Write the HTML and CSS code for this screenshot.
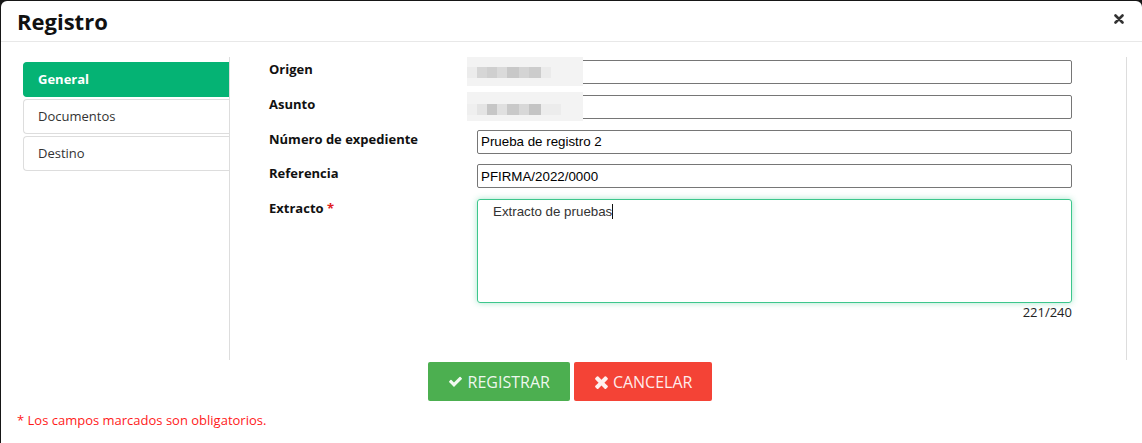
FILE: index.html
```html
<!DOCTYPE html>
<html>

<head>
    <title>Registro</title>
    <link rel="stylesheet" href="styles.css">
</head>

<body>

    <div class="modal">
        <div class="modal-header">
            <h2>Registro</h2>
            <svg class="close" viewBox="0 0 10 10" width="10" height="10">
                <path d="M1.5 1.5 L8.5 8.5 M8.5 1.5 L1.5 8.5" stroke="#333" stroke-width="2.6" stroke-linecap="round" />
            </svg>
        </div>

        <div class="modal-body">
            <div class="tabs">
                <div class="tab active">General</div>
                <div class="tab">Documentos</div>
                <div class="tab">Destino</div>
            </div>

            <div class="panel">
                <div class="field">
                    <label>Origen</label>
                    <div class="control">
                        <input type="text" class="input">
                        <div class="blur"><span></span></div>
                    </div>
                </div>

                <div class="field">
                    <label>Asunto</label>
                    <div class="control">
                        <input type="text" class="input">
                        <div class="blur blur-b"><span></span></div>
                    </div>
                </div>

                <div class="field">
                    <label>Número de expediente</label>
                    <div class="control">
                        <input type="text" class="input" value="Prueba de registro 2">
                    </div>
                </div>

                <div class="field">
                    <label>Referencia</label>
                    <div class="control">
                        <input type="text" class="input" value="PFIRMA/2022/0000">
                    </div>
                </div>

                <div class="field">
                    <label>Extracto <span class="req">*</span></label>
                    <div class="control">
                        <div class="textarea">Extracto de pruebas<span class="caret"></span></div>
                        <div class="counter">221/240</div>
                    </div>
                </div>
            </div>
        </div>

        <div class="actions">
            <button class="btn btn-ok">
                <svg viewBox="0 0 1792 1792" width="15" height="15">
                    <path fill="currentColor" d="M1671 566q0 40-28 68l-724 724-136 136q-28 28-68 28t-68-28l-136-136-362-362q-28-28-28-68t28-68l136-136q28-28 68-28t68 28l294 295 656-657q28-28 68-28t68 28l136 136q28 28 28 68z" />
                </svg>
                REGISTRAR
            </button>
            <button class="btn btn-cancel">
                <svg viewBox="100 250 1210 1300" width="13" height="14">
                    <path fill="currentColor" d="M1298 1322q0 40-28 68l-136 136q-28 28-68 28t-68-28l-294-294-294 294q-28 28-68 28t-68-28l-136-136q-28-28-28-68t28-68l294-294-294-294q-28-28-28-68t28-68l136-136q28-28 68-28t68 28l294 294 294-294q28-28 68-28t68 28l136 136q28 28 28 68t-28 68l-294 294 294 294q28 28 28 68z" />
                </svg>
                CANCELAR
            </button>
        </div>

        <p class="note">* Los campos marcados son obligatorios.</p>
    </div>

</body>

</html>
```

FILE: styles.css
```css
body {
    margin: 0;
    height: 443px;
    overflow: hidden;
    background: #161616;
}

.modal {
    margin: 1px 0 0 1px;
    width: 1141px;
    height: 460px;
    background: #ffffff;
    border-radius: 6px;
    font-family: 'Open Sans', sans-serif;
    color: #222;
}

.modal-header {
    height: 40px;
    border-bottom: 1px solid #e8e8e8;
    display: flex;
    align-items: center;
    justify-content: space-between;
    padding: 0 18px 0 16px;
}

.modal-header h2 {
    margin: 0;
    font-size: 22px;
    font-weight: 700;
    color: #111;
    line-height: 40px;
}

.close {
    margin-top: -4px;
}

.modal-body {
    display: flex;
    padding: 15px 0 0 22px;
}

.tabs {
    flex: 0 0 206px;
    padding-top: 5px;
    display: flex;
    flex-direction: column;
    gap: 2px;
}

.tab {
    height: 35px;
    box-sizing: border-box;
    border: 1px solid #dddddd;
    border-right: none;
    border-radius: 4px 0 0 4px;
    padding-left: 14px;
    line-height: 33px;
    font-size: 13px;
    color: #333;
}

.tab.active {
    background: #05b374;
    border-color: #05b374;
    color: #ffffff;
    font-weight: 700;
}

.panel {
    flex: 0 0 898px;
    height: 303px;
    box-sizing: border-box;
    border-left: 1px solid #dddddd;
    border-right: 1px solid #dddddd;
    padding: 3px 0 0 39px;
}

.field {
    display: flex;
    margin-bottom: 10.75px;
}

.field label {
    flex: 0 0 208px;
    font-size: 13px;
    font-weight: 700;
    color: #111;
    line-height: 19px;
}

.req {
    color: #e02020;
}

.control {
    position: relative;
    flex: 0 0 595px;
}

.input {
    display: block;
    width: 100%;
    height: 24px;
    box-sizing: border-box;
    margin: 0;
    border: 1px solid #767676;
    border-radius: 2px;
    padding: 1px 3px;
    font-family: 'Liberation Sans', Arial, sans-serif;
    font-size: 13.33px;
    color: #000;
    background: #fff;
}

.blur {
    position: absolute;
    left: -10px;
    top: -3px;
    width: 116px;
    height: 29px;
    background: #f3f3f3;
}

.blur span {
    position: absolute;
    left: 0;
    top: 10px;
    width: 84px;
    height: 11px;
    background: linear-gradient(90deg, #ececec 0 10px, #d6d6d6 10px 20px, #cfcfcf 20px 30px, #dadada 30px 40px, #c8c8c8 40px 52px, #d4d4d4 52px 62px, #cccccc 62px 74px, #ebebeb 74px);
}

.blur-b span {
    top: 12px;
    background: linear-gradient(90deg, #efefef 0 10px, #e4e4e4 10px 20px, #c6c6c6 20px 30px, #e0e0e0 30px 40px, #c9c9c9 40px 52px, #d8d8d8 52px 62px, #c4c4c4 62px 74px, #ececec 74px 94px);
    width: 94px;
}

.textarea {
    height: 104px;
    box-sizing: border-box;
    border: 1px solid #3cc68c;
    border-radius: 3px;
    box-shadow: 0 0 6px rgba(60, 198, 140, 0.45);
    padding: 4px 15px;
    font-family: 'Liberation Sans', Arial, sans-serif;
    font-size: 13.33px;
    color: #333;
}

.caret {
    display: inline-block;
    width: 1px;
    height: 15px;
    background: #111;
    vertical-align: -3px;
}

.counter {
    text-align: right;
    font-size: 13px;
    line-height: 18px;
    color: #222;
}

.actions {
    display: flex;
    justify-content: center;
    gap: 4px;
    margin-top: 2px;
    padding-right: 3px;
}

.btn {
    height: 39px;
    border: none;
    border-radius: 2px;
    padding: 0 20px;
    display: flex;
    align-items: center;
    gap: 5px;
    font-family: 'Open Sans', sans-serif;
    font-size: 16px;
    color: rgba(255, 255, 255, 0.92);
}

.btn-ok {
    background: #4caf50;
}

.btn-cancel {
    background: #f44336;
    padding: 0 20px 0 21px;
}

.note {
    margin: 10px 0 0 16px;
    font-size: 13px;
    line-height: 18px;
    color: #ff1a1a;
}
```
